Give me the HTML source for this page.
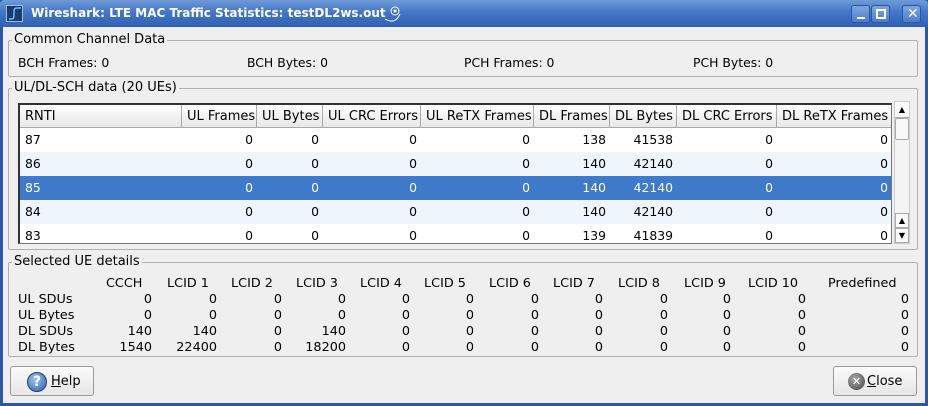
<!DOCTYPE html>
<html><head><style>
*{margin:0;padding:0;box-sizing:border-box}
body{width:928px;height:406px;overflow:hidden;font-family:"DejaVu Sans","Liberation Sans",sans-serif;font-size:12.4px;color:#000;background:#2a58a8;position:relative}
.a{position:absolute;white-space:nowrap}
#win{position:absolute;left:3px;top:27px;width:922px;height:376px;background:#efefef}
#title{position:absolute;left:0;top:0;width:928px;height:27px;background:linear-gradient(#6f9ad8,#4476c6 45%,#2f60b4);border-radius:4px 4px 0 0}
.grp{position:absolute;border:1px solid #b0b0b0;border-radius:2px}
.gl{position:absolute;background:#efefef;padding:0 2px;top:-9px;left:3px;font-size:13px}
.tb{position:absolute;left:18px;top:103px;width:874px;height:141px;border:1px solid #777;border-left:2px solid #333;border-top:2px solid #333;background:#fff;overflow:hidden}
.row{position:absolute;left:0;width:872px;height:24px}
.c{position:absolute;top:0;height:24px;line-height:24px;text-align:right;padding-right:4px}
.h{position:absolute;top:0;height:23px;line-height:23px;border-right:1px solid #aaa;border-bottom:1px solid #aaa;background:linear-gradient(#fdfdfd,#e8e8e8);padding-left:5px;font-size:13px}
.btn{position:absolute;border:1px solid #999;border-radius:3px;background:linear-gradient(#fbfbfb,#e6e6e6);height:30px}
.tbtn{position:absolute;top:5px;width:19px;height:18px;border:1px solid #2b56a0;border-radius:3px;background:linear-gradient(#7ea6e0,#4b7ccb)}
</style></head><body>
<div id="title">
 <div class="a" style="left:6px;top:5px;width:17px;height:17px;background:#1d3c6e;border:1px solid #9fb8de">
  <svg width="15" height="15" style="position:absolute;left:0;top:0"><path d="M2 13 H5 Q7 13 7 9 V5 Q7 2 10 2 H14" stroke="#5cc6ff" stroke-width="1.5" fill="none"/></svg>
 </div>
 <div class="a" style="left:31px;top:6px;color:#fff;font-weight:bold;font-size:12px">Wireshark: LTE MAC Traffic Statistics: testDL2ws.out</div>
 <svg class="a" style="left:383px;top:3px" width="20" height="20"><circle cx="12" cy="8" r="4" fill="none" stroke="#fff"/><circle cx="12" cy="8" r="1.5" fill="#fff"/><path d="M2 16 Q12 22 17 11" stroke="#fff" fill="none"/></svg>
 <div class="tbtn" style="left:851px"><div class="a" style="left:5px;top:11px;width:8px;height:2px;background:#fff"></div></div>
 <div class="tbtn" style="left:871px"><div class="a" style="left:4px;top:3px;width:10px;height:10px;border:2px solid #fff"></div></div>
 <div class="tbtn" style="left:902px"><div class="a" style="left:4px;top:0px;color:#fff;font-size:14px">✕</div></div>
</div>
<div id="win">
 <div class="grp" style="left:5px;top:13px;width:910px;height:37px"><div class="gl">Common Channel Data</div></div>
 <div class="a" style="left:15px;top:28px">BCH Frames: 0</div>
 <div class="a" style="left:244px;top:28px">BCH Bytes: 0</div>
 <div class="a" style="left:461px;top:28px">PCH Frames: 0</div>
 <div class="a" style="left:690px;top:28px">PCH Bytes: 0</div>
 <div class="grp" style="left:5px;top:61px;width:910px;height:162px"><div class="gl">UL/DL-SCH data (20 UEs)</div></div>
 <div class="grp" style="left:5px;top:235px;width:910px;height:95px"><div class="gl">Selected UE details</div></div>
</div>
<div class="tb">
 <div class="row" style="top:0;height:23px">
  <div class="h" style="left:0;width:162px">RNTI</div>
  <div class="h" style="left:162px;width:75px">UL Frames</div>
  <div class="h" style="left:237px;width:66px">UL Bytes</div>
  <div class="h" style="left:303px;width:98px">UL CRC Errors</div>
  <div class="h" style="left:401px;width:113px">UL ReTX Frames</div>
  <div class="h" style="left:514px;width:76px">DL Frames</div>
  <div class="h" style="left:590px;width:67px">DL Bytes</div>
  <div class="h" style="left:657px;width:100px">DL CRC Errors</div>
  <div class="h" style="left:757px;width:115px">DL ReTX Frames</div>
 </div>
 <div id="rows"></div>
</div>
<div class="a" style="left:894px;top:101px;width:16px;height:143px;background:#f4f4f4;border:1px solid #ccc">
 <div class="a" style="left:0;top:0;width:14px;height:16px;background:#fafafa;border-bottom:1px solid #aaa;font-size:8px;text-align:center;line-height:16px">▲</div>
 <div class="a" style="left:0;top:16px;width:14px;height:22px;background:#f8f8f8;border:1px solid #aaa;border-radius:2px"></div>
 <div class="a" style="left:0;top:111px;width:14px;height:15px;background:#fafafa;border:1px solid #aaa;font-size:8px;text-align:center;line-height:13px">▲</div>
 <div class="a" style="left:0;top:126px;width:14px;height:15px;background:#fafafa;border:1px solid #aaa;font-size:8px;text-align:center;line-height:13px">▼</div>
</div>
<div id="det"></div>
<div class="btn" style="left:10px;top:366px;width:84px">
 <div class="a" style="left:16px;top:5px;width:20px;height:20px;border-radius:50%;background:radial-gradient(circle at 40% 35%,#9cc2f0,#2c5fae);border:1px solid #1f3f7a;color:#fff;font-weight:bold;font-size:14px;text-align:center;line-height:18px">?</div>
 <div class="a" style="left:40px;top:7px;font-size:13px"><u>H</u>elp</div>
</div>
<div class="btn" style="left:833px;top:366px;width:84px">
 <div class="a" style="left:14px;top:6px;width:17px;height:17px;border-radius:50%;background:radial-gradient(circle at 40% 35%,#aaa,#444);color:#fff;font-size:11px;font-weight:bold;text-align:center;line-height:17px">✕</div>
 <div class="a" style="left:33px;top:7px;font-size:13px"><u>C</u>lose</div>
</div>
<script>
var cols=[[0,162],[162,75],[237,66],[303,98],[401,113],[514,76],[590,67],[657,100],[757,115]];
var d=[["87",0,0,0,0,138,41538,0,0],["86",0,0,0,0,140,42140,0,0],["85",0,0,0,0,140,42140,0,0],["84",0,0,0,0,140,42140,0,0],["83",0,0,0,0,139,41839,0,0]];
var bg=["#fff","#eef5fd","#3f79c9","#eef5fd","#fff"];var h="";
d.forEach(function(r,i){h+='<div class="row" style="top:'+(23+i*24)+'px;background:'+bg[i]+';color:'+(i==2?'#fff':'#000')+'">';
r.forEach(function(v,j){h+='<div class="c" style="left:'+cols[j][0]+'px;width:'+cols[j][1]+'px;'+(j==0?'text-align:left;padding-left:5px':'')+'">'+v+'</div>'});h+='</div>'});
document.getElementById('rows').innerHTML=h;
var hd=[["CCCH",106,152],["LCID 1",167,217],["LCID 2",231,282],["LCID 3",296,346],["LCID 4",360,410],["LCID 5",424,474],["LCID 6",489,539],["LCID 7",553,603],["LCID 8",618,668],["LCID 9",684,731],["LCID 10",748,806],["Predefined",828,909]];
var lab=["UL SDUs","UL Bytes","DL SDUs","DL Bytes"];
var vals=[[0,0,0,0,0,0,0,0,0,0,0,0],[0,0,0,0,0,0,0,0,0,0,0,0],[140,140,0,140,0,0,0,0,0,0,0,0],[1540,22400,0,18200,0,0,0,0,0,0,0,0]];
var s="";hd.forEach(function(x){s+='<div class="a" style="left:'+x[1]+'px;top:276px;font-size:12.8px">'+x[0]+'</div>'});
lab.forEach(function(l,i){var y=292+i*16;s+='<div class="a" style="left:18px;top:'+y+'px;font-size:12.8px">'+l+'</div>';
vals[i].forEach(function(v,j){s+='<div class="a" style="right:'+(928-hd[j][2])+'px;top:'+y+'px;font-size:12.8px">'+v+'</div>'})});
document.getElementById('det').innerHTML=s;
</script>
</body></html>
